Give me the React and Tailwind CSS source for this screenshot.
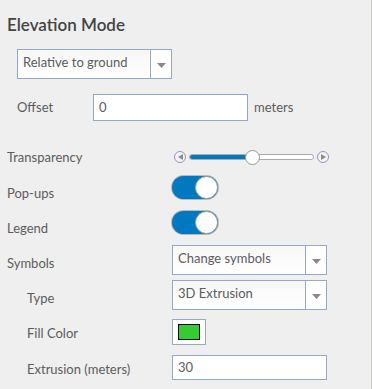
import { useState } from 'react';

const Caret = () => (
  <svg width="9" height="5" viewBox="0 0 9 5" className="block">
    <path d="M0 0 L9 0 L4.5 5 Z" fill="#8a8a8a" />
  </svg>
);

const SelectBox = ({ value, className = '' }) => (
  <div className={`flex h-[30px] bg-white border border-[#95a8c6] ${className}`}>
    <div className="flex-1 flex items-center pl-[5px] pb-[2px] bg-gradient-to-b from-[#f7f7f7] to-white">{value}</div>
    <div className="w-[21px] flex items-center justify-center border-l border-[#95a8c6] pt-[2px]">
      <Caret />
    </div>
  </div>
);

const Toggle = ({ on }) => (
  <div className={`w-[46px] h-[23px] rounded-full flex items-center justify-end shadow-[0_0_0_1px_#b9b9b9] ${on ? 'bg-[#0079c1]' : 'bg-[#ccc]'}`}>
    <div className="w-[23px] h-[23px] rounded-full bg-white border border-[#9a9a9a]" />
  </div>
);

const RoundBtn = ({ dir }) => (
  <div className="w-[12px] h-[12px] rounded-full border border-[#8c98b8] bg-[#f4f4f4] flex items-center justify-center">
    <svg width="5" height="6" viewBox="0 0 5 6">
      {dir === 'left' ? <path d="M5 0 L5 6 L0 3 Z" fill="#8a8a8a" /> : <path d="M0 0 L0 6 L5 3 Z" fill="#8a8a8a" />}
    </svg>
  </div>
);

const Slider = () => (
  <div className="flex items-center gap-[3px]">
    <RoundBtn dir="left" />
    <div className="relative w-[125px] h-[6px] rounded-full border border-[#aaa] bg-white flex items-center">
      <div className="h-[4px] w-[62px] bg-[#0079c1] rounded-l-full" />
      <div className="absolute left-[55px] top-[-5px] w-[15px] h-[15px] rounded-full bg-white border border-[#999]" />
    </div>
    <RoundBtn dir="right" />
  </div>
);

// label box is 16px tall; lm = offset of label top from row top
const Row = ({ label, indent, className, lm, children }) => (
  <div className={`flex items-start ${className}`}>
    <div className={`w-[165px] leading-[16px] ${lm} ${indent ? 'pl-[20px]' : ''}`}>{label}</div>
    {children}
  </div>
);

export default function App() {
  const [value] = useState('30');
  return (
    <div className="w-[372px] h-[389px] bg-[#efefef] border-r border-[#c8c8c4] overflow-hidden text-[13px] text-[#5c5c5c]" style={{ fontFamily: 'Lato, "Liberation Sans", sans-serif' }}>
      <div className="pl-[7px] pt-[13px]">
        <h2 className="text-[17px] text-[#444] font-semibold leading-[24px]">Elevation Mode</h2>
        <div className="pl-[10px] pt-[12px]">
          <SelectBox value="Relative to ground" className="w-[155px]" />
          <div className="flex items-center mt-[15px]">
            <div className="w-[76px]">Offset</div>
            <div className="w-[155px] h-[27px] bg-white border border-[#95a8c6] flex items-center pl-[5px]">0</div>
            <div className="pl-[6px]">meters</div>
          </div>
        </div>
        <div className="mt-[26px] flex flex-col">
          <div className="flex items-center h-[20px]">
            <div className="w-[167px] pt-[2px]">Transparency</div>
            <Slider />
          </div>
          <Row label="Pop-ups" className="h-[23px] mt-[9px]" lm="mt-[9px]"><Toggle on /></Row>
          <Row label="Legend" className="h-[23px] mt-[12px]" lm="mt-[9px]"><Toggle on /></Row>
          <Row label="Symbols" className="h-[30px] mt-[11px]" lm="mt-[10px]">
            <SelectBox value="Change symbols" className="w-[155px]" />
          </Row>
          <Row label="Type" indent className="h-[30px] mt-[5px]" lm="mt-[10px]">
            <SelectBox value="3D Extrusion" className="w-[155px]" />
          </Row>
          <Row label="Fill Color" indent className="h-[26px] mt-[9px]" lm="mt-[6px]">
            <div className="w-[34px] h-[26px] bg-white border border-[#95a8c6] flex items-center justify-center">
              <div className="w-[22px] h-[16px] bg-[#33cc33] border border-black" />
            </div>
          </Row>
          <Row label="Extrusion (meters)" indent className="h-[25px] mt-[10px]" lm="mt-[6px]">
            <div className="w-[155px] h-[25px] bg-white border border-[#95a8c6] flex items-center pl-[5px]">{value}</div>
          </Row>
        </div>
      </div>
    </div>
  );
}
